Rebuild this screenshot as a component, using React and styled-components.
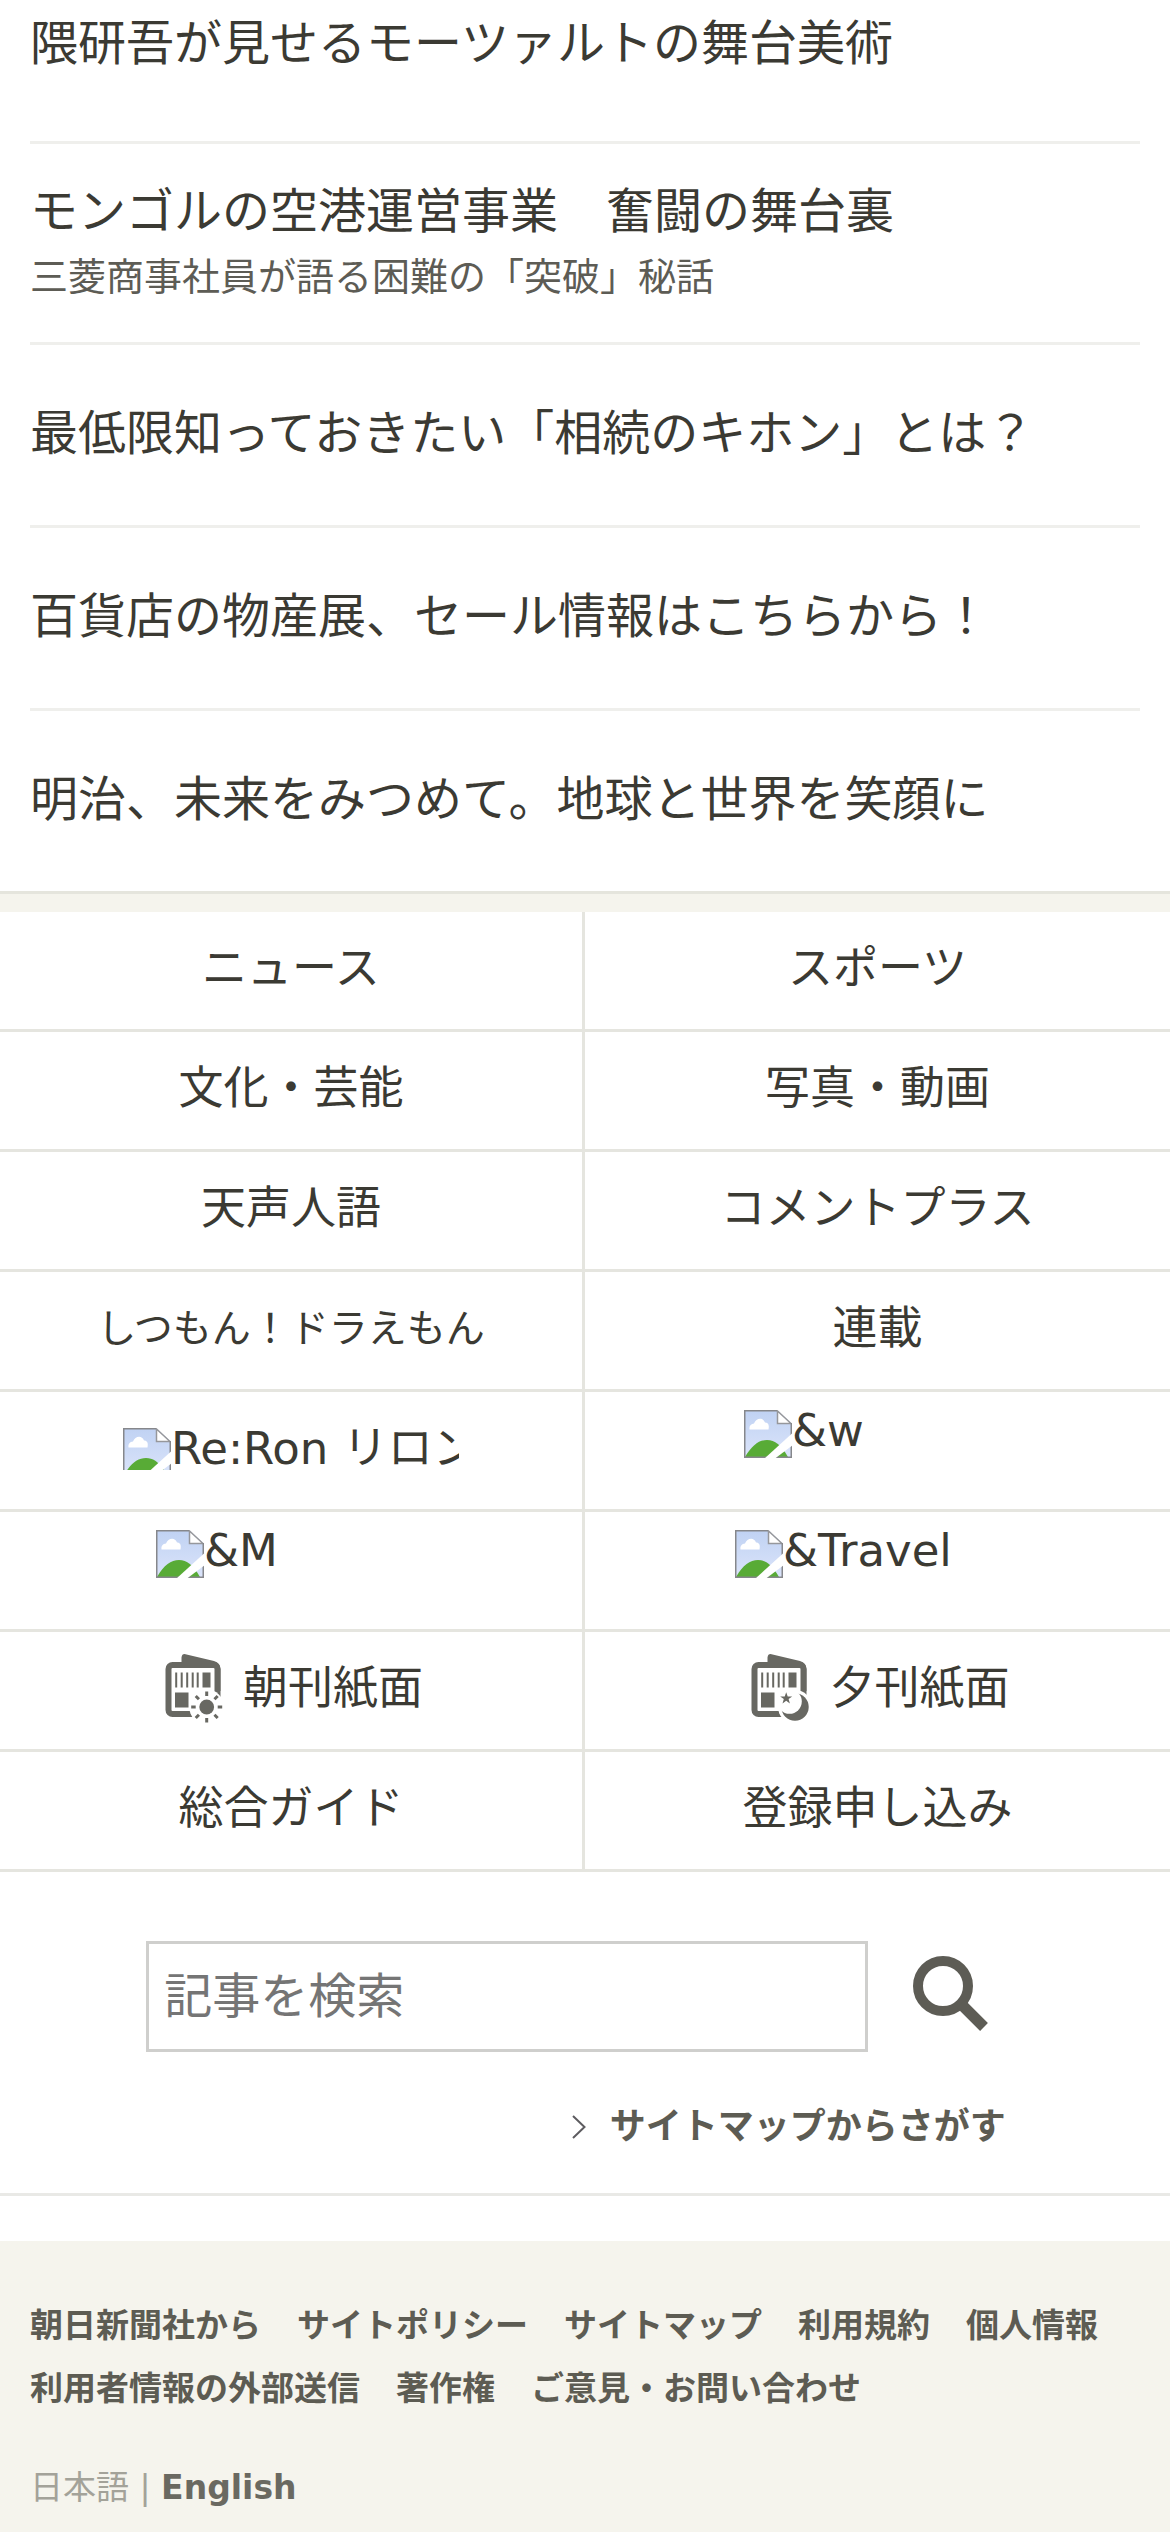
import React from "react";
import styled, { createGlobalStyle } from "styled-components";

const GlobalStyle = createGlobalStyle`
  *, *::before, *::after { box-sizing: border-box; }
  body {
    margin: 0;
    background: #f5f4ed;
    color: #3b3a33;
    font-family: "DejaVu Sans", "Noto Sans CJK JP", sans-serif;
    -webkit-text-size-adjust: 100%;
  }
  ul { margin: 0; padding: 0; list-style: none; }
  a { color: inherit; text-decoration: none; }
`;

const Topics = styled.ul`
  padding: 0 30px;
  background: #fff;
  border-bottom: 3px solid #e5e5dd;
`;

const Topic = styled.li`
  border-bottom: 3px solid #efefec;
  &:last-child { border-bottom: 0; }
`;

const topicPadding = {
  regular: "52px 0 56px",
  lead: "7px 0 62px",
  detailed: "31px 0 35px",
};

const TopicLink = styled.a`
  display: block;
  padding: ${({ $kind }) => topicPadding[$kind]};
`;

const TopicTitle = styled.span`
  display: block;
  font-size: 48px;
  line-height: 72px;
`;

const TopicNote = styled.span`
  display: block;
  color: #5d5c55;
  font-size: 38px;
  line-height: 60px;
`;

const Menu = styled.ul`
  display: grid;
  grid-template-columns: repeat(2, minmax(0, 1fr));
  margin-top: 18px;
  background: #fff;
`;

const MenuItem = styled.li`
  border-bottom: 3px solid #e5e5df;
  &:nth-child(odd) { border-right: 3px solid #e5e5df; }
`;

const MenuLink = styled.a`
  display: flex;
  align-items: ${({ $top }) => ($top ? "flex-start" : "center")};
  justify-content: center;
  gap: 18px;
  height: 117px;
  padding: ${({ $top, $icon }) => ($top ? "18px 0 0" : $icon ? "0 0 4px 6px" : "0 0 4px")};
  font-size: ${({ $small }) => ($small ? "39px" : "45px")};
  line-height: 60px;
`;

const MissingImage = styled.span`
  display: flex;
  width: ${({ $width }) => $width}px;
  height: ${({ $height }) => $height}px;
  overflow: ${({ $clip }) => ($clip ? "hidden" : "visible")};
  line-height: 42px;
  white-space: nowrap;
  svg { flex: none; }
`;

const SearchArea = styled.section`
  padding: 69px 0 39px;
  background: #fff;
  border-bottom: 3px solid #e9e9e6;
`;

const SearchInner = styled.div`
  width: 75%;
  margin: 0 auto;
`;

const SearchForm = styled.form`
  display: flex;
`;

const SearchInput = styled.input`
  flex: 1;
  min-width: 0;
  height: 111px;
  padding: 0 15px 2px;
  border: 3px solid #cfcfcd;
  border-radius: 0;
  background: #fff;
  color: #3b3a33;
  font: inherit;
  font-size: 48px;
  &::placeholder { color: #757575; opacity: 1; }
`;

const SearchButton = styled.button`
  display: flex;
  align-items: flex-start;
  padding: 15px 36px 0 45px;
  border: 0;
  background: none;
  cursor: pointer;
`;

const SitemapLink = styled.a`
  display: flex;
  align-items: center;
  justify-content: flex-end;
  gap: 24px;
  margin-top: 48px;
  padding-right: 18px;
  color: #5d5c53;
  font-size: 36px;
  font-weight: bold;
  line-height: 54px;
`;

const Footer = styled.footer`
  border-top: 45px solid #fff;
  padding: 53px 30px 13px;
  color: #5d5c53;
  font-size: 33px;
  line-height: 63px;
`;

const FooterLinks = styled.ul`
  display: flex;
  flex-wrap: wrap;
  column-gap: 36px;
  font-weight: bold;
`;

const Language = styled.p`
  margin: 36px 0 0;
  color: #a3a299;
  a { color: #6a6961; font-weight: bold; }
`;

const MissingIcon = () => (
  <svg width="48" height="48" viewBox="0 0 48 48" aria-hidden="true">
    <defs>
      <linearGradient id="sky" x1="0" y1="0" x2="0" y2="1">
        <stop offset="0" stopColor="#c0d2f3" />
        <stop offset="1" stopColor="#dbe4fa" />
      </linearGradient>
    </defs>
    <path d="M.75.75H34L47.25 13V47.25H.75Z" fill="url(#sky)" />
    <path d="M1 47C8 35 15 30 23 30s14 5 21 17Z" fill="#58ab36" />
    <path d="M5.500 19.500c-.5-4 1.500-5.500 4.500-6 2-5.500 9-6.500 11-1 3 0 4.500 2 3.500 7Z" fill="#fff" />
    <path d="M33.500 1v12.500h13.500Z" fill="#fff" stroke="#96979b" strokeWidth="1.500" />
    <path d="M33 .75H.75V47.250H47.250V13" fill="none" stroke="#86878b" strokeWidth="1.500" />
    <path d="M20.500 48.500L48.500 23V35.500L31 48.500Z" fill="#fff" />
  </svg>
);

const rays = [0, 45, 90, 135, 180, 225, 270, 315];

const NewspaperIcon = ({ edition }) => (
  <svg width="60" height="72" viewBox="0 0 60 72" fill="#686862" aria-hidden="true">
    <path d="M16.500 12V4.500Q17 .5 20.500 1.200L49 8Q55.500 10 55.500 16V38H50V12Z" />
    <rect x="3.500" y="12" width="49" height="49" rx="4" fill="#fff" stroke="#686862" strokeWidth="6" />
    {[11, 16.5, 22, 27.5, 32.5].map((x) => (
      <rect key={x} x={x - 0.8} y="19.500" width="2" height="15" />
    ))}
    <rect x="37.500" y="19.500" width="8" height="15" />
    <rect x="10" y="39.500" width="13.500" height="15" />
    {edition === "morning" ? (
      <>
        <circle cx="41.700" cy="54" r="17.500" fill="#fff" />
        <circle cx="41.700" cy="54" r="7.400" />
        {rays.map((angle) => (
          <path
            key={angle}
            d="M41.700 38.500v4.500"
            stroke="#686862"
            strokeWidth="3"
            transform={`rotate(${angle} 41.7 54)`}
          />
        ))}
      </>
    ) : (
      <>
        <circle cx="44" cy="54" r="17" fill="#fff" />
        <circle cx="44" cy="54" r="13.700" />
        <circle cx="38.500" cy="48.500" r="12.300" fill="#fff" />
        <path d="M35.200 39.200l1.500 4.200h4.500l-3.600 2.700 1.300 4.300-3.700-2.600-3.700 2.600 1.300-4.300-3.600-2.700h4.500Z" />
      </>
    )}
  </svg>
);

const SearchIcon = () => (
  <svg width="75" height="75" viewBox="0 0 75 75" fill="none" stroke="#5d5c55" aria-hidden="true">
    <circle cx="30" cy="30" r="25" strokeWidth="10" />
    <path d="M48 48L71 71" strokeWidth="11" />
  </svg>
);

const ChevronIcon = () => (
  <svg width="14" height="24" viewBox="0 0 14 24" fill="none" stroke="#5d5c60" strokeWidth="2" aria-hidden="true">
    <path d="M1 1L12.500 12L1 23" />
  </svg>
);

const topics = [
  { title: "隈研吾が見せるモーツァルトの舞台美術", kind: "lead" },
  {
    title: "モンゴルの空港運営事業　奮闘の舞台裏",
    note: "三菱商事社員が語る困難の「突破」秘話",
    kind: "detailed",
  },
  { title: "最低限知っておきたい「相続のキホン」とは？" },
  { title: "百貨店の物産展、セール情報はこちらから！" },
  { title: "明治、未来をみつめて。地球と世界を笑顔に" },
];

const menu = [
  { label: "ニュース" },
  { label: "スポーツ" },
  { label: "文化・芸能" },
  { label: "写真・動画" },
  { label: "天声人語" },
  { label: "コメントプラス" },
  { label: "しつもん！ドラえもん", small: true },
  { label: "連載" },
  { label: "Re:Ron リロン", image: { width: 336, height: 42, clip: true } },
  { label: "&w", image: { width: 267, height: 81 }, top: true },
  { label: "&M", image: { width: 270, height: 81 }, top: true },
  { label: "&Travel", image: { width: 285, height: 81 }, top: true },
  { label: "朝刊紙面", edition: "morning" },
  { label: "夕刊紙面", edition: "evening" },
  { label: "総合ガイド" },
  { label: "登録申し込み" },
];

const footerLinks = [
  "朝日新聞社から",
  "サイトポリシー",
  "サイトマップ",
  "利用規約",
  "個人情報",
  "利用者情報の外部送信",
  "著作権",
  "ご意見・お問い合わせ",
];

export default function App() {
  return (
    <>
      <GlobalStyle />
      <main>
        <Topics>
          {topics.map(({ title, note, kind = "regular" }) => (
            <Topic key={title}>
              <TopicLink href="#" $kind={kind}>
                <TopicTitle>{title}</TopicTitle>
                {note && <TopicNote>{note}</TopicNote>}
              </TopicLink>
            </Topic>
          ))}
        </Topics>
        <nav>
          <Menu>
            {menu.map(({ label, small, image, top, edition }) => (
              <MenuItem key={label}>
                <MenuLink href="#" $small={small} $top={top} $icon={edition}>
                  {edition && <NewspaperIcon edition={edition} />}
                  {image ? (
                    <MissingImage $width={image.width} $height={image.height} $clip={image.clip}>
                      <MissingIcon />
                      {label}
                    </MissingImage>
                  ) : (
                    label
                  )}
                </MenuLink>
              </MenuItem>
            ))}
          </Menu>
        </nav>
        <SearchArea>
          <SearchInner>
            <SearchForm role="search" onSubmit={(event) => event.preventDefault()}>
              <SearchInput type="text" aria-label="記事を検索" placeholder="記事を検索" />
              <SearchButton type="submit" aria-label="検索">
                <SearchIcon />
              </SearchButton>
            </SearchForm>
            <SitemapLink href="#">
              <ChevronIcon />
              サイトマップからさがす
            </SitemapLink>
          </SearchInner>
        </SearchArea>
      </main>
      <Footer>
        <FooterLinks>
          {footerLinks.map((label) => (
            <li key={label}>
              <a href="#">{label}</a>
            </li>
          ))}
        </FooterLinks>
        <Language>
          日本語 | <a href="#" lang="en">English</a>
        </Language>
      </Footer>
    </>
  );
}
